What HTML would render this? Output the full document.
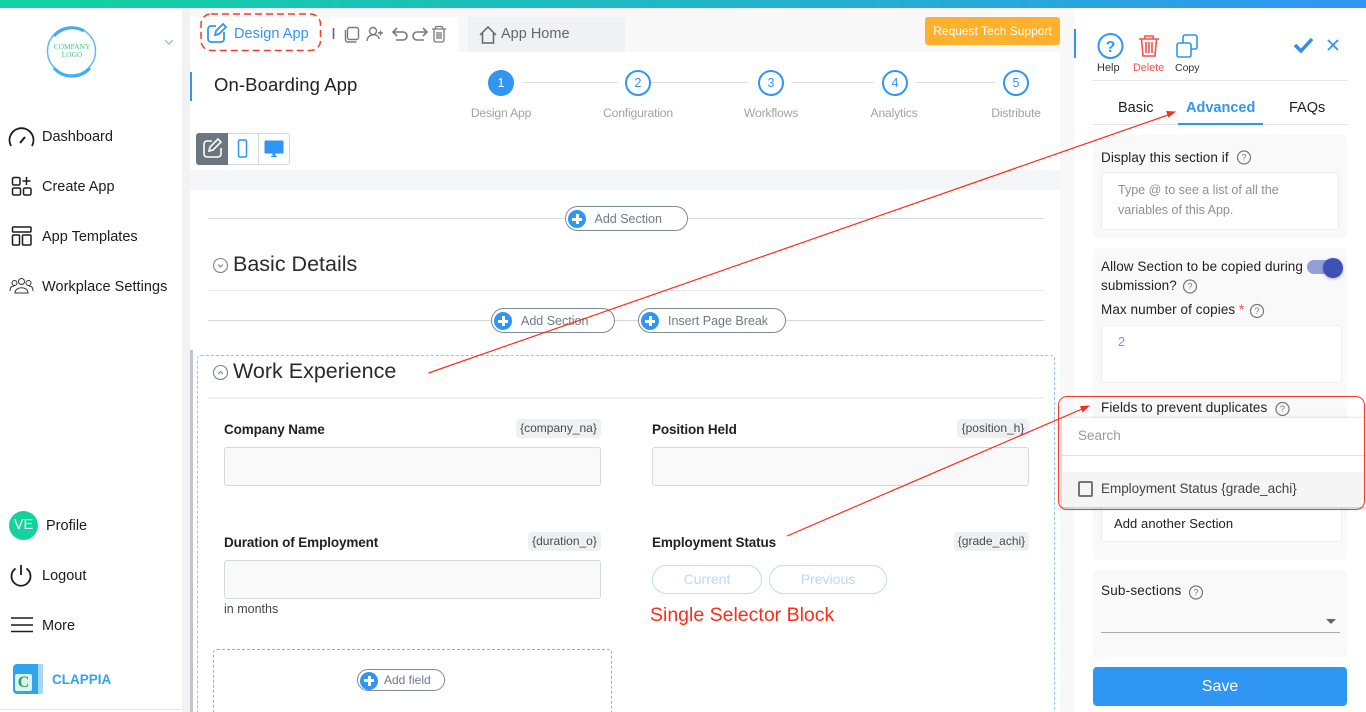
<!DOCTYPE html>
<html><head><meta charset="utf-8"><style>
html,body{margin:0;padding:0;width:1366px;height:712px;overflow:hidden;background:#fff;font-family:"Liberation Sans",sans-serif;color:#222}
#p{position:relative;width:1366px;height:712px;overflow:hidden}
.a{position:absolute;box-sizing:border-box}
.t{position:absolute;white-space:nowrap;line-height:20px;height:20px}
svg{position:absolute;overflow:visible}
.nav{font-size:14.5px;color:#1c1c1c}
.step{font-size:12.2px;color:#a3a3a3;letter-spacing:-.2px;text-align:center;width:100px}
.sc{border-radius:50%;background:#fff;border:2px solid #3096f3;width:26px;height:26px;color:#3096f3;font-size:12.5px;text-align:center;line-height:22px;position:absolute;box-sizing:border-box}
.pill{position:absolute;box-sizing:border-box;height:25px;border:1px solid #7d8a97;border-radius:13px;background:#fff;color:#6e7a86;font-size:12.5px;line-height:24px;white-space:nowrap}
.plus{position:absolute;left:2px;top:3px;width:18px;height:18px;border-radius:50%;background:#3096f3}
.plus:before{content:"";position:absolute;left:4px;top:7.5px;width:10px;height:3px;background:#fff}
.plus:after{content:"";position:absolute;left:7.5px;top:4px;width:3px;height:10px;background:#fff}
.h{height:1px;background:#d8d8d8;position:absolute}
.lab{font-size:13.5px;font-weight:bold;color:#222;letter-spacing:-.12px}
.tag{position:absolute;height:19px;background:#eff0f3;border-radius:4px;font-size:12px;color:#4a4a4a;line-height:18px;text-align:center;white-space:nowrap}
.inp{position:absolute;box-sizing:border-box;height:39px;width:377px;background:#f9f9fa;border:1px solid #d5d8dc;border-radius:3px}
.sel{position:absolute;box-sizing:border-box;height:29px;border:1px solid #bcdcfb;border-radius:15px;color:#b9dafb;font-size:14px;line-height:27px;text-align:center}
.rt{font-size:13.5px;color:#222;letter-spacing:.07px}
.card{position:absolute;background:#f9f9f9;border-radius:5px;left:1093px;width:254px}
.white{position:absolute;background:#fff;border:1px solid #eee;border-radius:4px;box-sizing:border-box}
</style></head><body><div id="p">

<div class="a" style="left:0;top:0;width:1366px;height:8px;background:linear-gradient(90deg,#10d2a0,#22b7c6 50%,#2f96f3)"></div>
<div class="a" style="left:182px;top:8px;width:8px;height:704px;background:#f2f2f2"></div>
<div class="a" style="left:190px;top:8px;width:884px;height:704px;background:#f8f8f8"></div>
<div class="a" style="left:0;top:709px;width:182px;height:1px;background:#e6e6e6"></div>

<!-- sidebar -->
<svg style="left:0;top:0" width="190" height="712" fill="none" stroke="#1c1c1c">
<circle cx="71.5" cy="51" r="24" stroke="#5bbcf3" stroke-width="1.5"/>
<path d="M54 36a24 24 0 0 1 30-5M90 68a24 24 0 0 1-36 0" stroke="#42aef0" stroke-width="3"/>
<path d="M165 40l4 4 4-4" stroke="#74b4f2" stroke-width="1"/>
<path d="M11 146a12 12 0 1 1 21 0" stroke-width="1.8"/><path d="M20 143l5-6" stroke-width="2"/>
<g stroke-width="1.5"><rect x="12.5" y="177.500" width="7.500" height="7.500" rx="1.500"/><rect x="12.5" y="188" width="8" height="7" rx="1.500"/><rect x="23.5" y="188" width="7.500" height="7" rx="1.500"/><path d="M22.5 181h8M26.500 177v8"/>
<rect x="12.5" y="227" width="18.500" height="5" rx="1"/><rect x="12.5" y="235" width="7" height="10" rx="1"/><rect x="22.5" y="235" width="8.500" height="10" rx="1"/></g>
<g stroke-width="1" stroke="#333"><circle cx="21.5" cy="281.500" r="3"/><circle cx="14.5" cy="283" r="2.500"/><circle cx="28.5" cy="283" r="2.500"/><path d="M15 293c0-7 13-7 13 0l-2 0h-9zM10 291c0-4 2-5 4-5M33 291c0-4-2-5-4-5"/></g>
<path d="M15.5 568.500a9.500 9.500 0 1 0 11 0M21 565v10" stroke-width="1.800"/>
<path d="M11 618h22M11 625h22M11 631.500h22" stroke-width="1.500"/>
</svg>
<div class="t" style="left:50px;top:43px;font:7.5px/7.5px 'Liberation Serif',serif;color:#3fce85;width:44px;text-align:center;height:16px">COMPANY<br>LOGO</div>
<div class="t nav" style="left:42px;top:127px">Dashboard</div>
<div class="t nav" style="left:42px;top:177px">Create App</div>
<div class="t nav" style="left:42px;top:227px">App Templates</div>
<div class="t nav" style="left:42px;top:277px;letter-spacing:.04px">Workplace Settings</div>
<div class="a" style="left:9px;top:511px;width:29px;height:29px;border-radius:50%;background:#12d39b;color:#fff;font-size:14.5px;text-align:center;line-height:29px">VE</div>
<div class="t nav" style="left:46px;top:516px">Profile</div>
<div class="t nav" style="left:42px;top:566px">Logout</div>
<div class="t nav" style="left:42px;top:616px">More</div>
<div class="a" style="left:13px;top:664px;width:30px;height:30px;border-radius:4px;background:#2ea5ec"></div>
<div class="a" style="left:38px;top:664px;width:5px;height:30px;background:#a6d7f7"></div>
<div class="a" style="left:15px;top:674px;width:17px;height:17px;background:#dff3ea;border-radius:2px;color:#1fa85b;font:bold 16px/17px 'Liberation Serif',serif;text-align:center">C</div>
<div class="t" style="left:52px;top:670px;font-size:13.5px;font-weight:bold;color:#2ea5ec">CLAPPIA</div>

<!-- top header -->
<div class="a" style="left:190px;top:17px;width:268px;height:35px;background:#fff"></div>
<div class="a" style="left:468px;top:17px;width:157px;height:35px;background:#f0f1f4"></div>
<div class="a" style="left:190px;top:52px;width:870px;height:118px;background:#fff"></div>
<div class="a" style="left:190px;top:170px;width:870px;height:20px;background:#f5f6f8"></div>
<div class="a" style="left:190px;top:190px;width:870px;height:522px;background:#fff"></div>
<div class="a" style="left:1074px;top:8px;width:292px;height:704px;background:#fff"></div>
<div class="a" style="left:190px;top:72px;width:2px;height:29px;background:#3096f3"></div>
<div class="a" style="left:190px;top:350px;width:3px;height:362px;background:#bcc6cf"></div>

<div class="t" style="left:234px;top:24px;font-size:14.5px;color:#3096f3;letter-spacing:.06px">Design App</div>
<div class="t" style="left:501px;top:24px;font-size:14.5px;color:#666">App Home</div>
<div class="t" style="left:214px;top:75px;font-size:18.5px;color:#222;letter-spacing:.1px">On-Boarding App</div>

<svg style="left:0;top:0" width="1366" height="712" fill="none">
<rect x="201" y="14" width="119.500" height="36.500" rx="10" stroke="#fb3a27" stroke-width="1.500" stroke-dasharray="7 4"/>
<g stroke="#3096f3" stroke-width="1.800"><path d="M216 26h-5a3 3 0 0 0-3 3v10a3 3 0 0 0 3 3h10a3 3 0 0 0 3-3v-7"/><path d="M215 35l1-4 7-7 3 3-7 7z"/></g>
<path d="M333.500 28v11" stroke="#666" stroke-width="1.600"/>
<g stroke="#7a7a7a" stroke-width="1.400"><rect x="347.500" y="27.500" width="11" height="12" rx="2"/><path d="M345.500 30v10a2 2 0 0 0 2 2h9"/>
<circle cx="373" cy="31" r="3.500"/><path d="M367 41c0-8 12-8 12-2M378 33h5M380.500 30.500v5"/>
<path d="M397 28l-4 4 4 4M393 32h10a4 4 0 0 1 0 8h-7" stroke-width="1.600"/>
<path d="M423 28l4 4-4 4M427 32h-10a4 4 0 0 0 0 8h7" stroke-width="1.600"/>
<path d="M432 29h14M435.500 29v-1.500a1 1 0 0 1 1-1h5a1 1 0 0 1 1 1V29M434 29v11a2 2 0 0 0 2 2h6a2 2 0 0 0 2-2V29M437 32v7M439 32v7M441 32v7" stroke-width="1.300"/></g>
<path d="M480 35l8-8 8 8M482.500 33v10h11V33" stroke="#666" stroke-width="1.500"/>
<path d="M522 82.500h96M646 82.500h102M791 82.500h83M915 82.500h81" stroke="#e0e0e0" stroke-width="1"/>
</svg>

<!-- steps -->
<div class="sc" style="left:488px;top:70px;background:#3096f3;color:#fff">1</div>
<div class="sc" style="left:625px;top:70px">2</div>
<div class="sc" style="left:758px;top:70px">3</div>
<div class="sc" style="left:882px;top:70px">4</div>
<div class="sc" style="left:1003px;top:70px">5</div>
<div class="t step" style="left:451px;top:103px">Design App</div>
<div class="t step" style="left:588px;top:103px">Configuration</div>
<div class="t step" style="left:721px;top:103px">Workflows</div>
<div class="t step" style="left:844px;top:103px">Analytics</div>
<div class="t step" style="left:966px;top:103px">Distribute</div>

<div class="a" style="left:925px;top:17px;width:135px;height:28px;background:#ffb02c;border-radius:3px;color:#fff;font-size:12px;text-align:center;line-height:28px">Request Tech Support</div>

<!-- view toggle -->
<div class="a" style="left:196px;top:133px;width:94px;height:32px;border:1px solid #d5d5d5;border-radius:3px"></div>
<div class="a" style="left:196px;top:133px;width:32px;height:32px;background:#6b7680;border-radius:3px 0 0 3px"></div>
<div class="a" style="left:258px;top:133px;width:1px;height:32px;background:#d5d5d5"></div>
<svg style="left:0;top:0" width="300" height="170" fill="none">
<path d="M212 141h-5a3 3 0 0 0-3 3v10a3 3 0 0 0 3 3h11a3 3 0 0 0 3-3v-6M209 151l1-4 8-8 3 3-8 8z" stroke="#fff" stroke-width="1.600"/>
<rect x="238.500" y="140" width="8" height="17" rx="1.500" stroke="#3096f3" stroke-width="1.500" fill="#fff"/>
<path d="M266 141h16a1 1 0 0 1 1 1v11h-18v-11a1 1 0 0 1 1-1zM271 156.500h6" stroke="#3096f3" stroke-width="1" fill="#3096f3"/><path d="M274 153v3" stroke="#3096f3" stroke-width="3"/>
</svg>

<!-- canvas -->
<div class="h" style="left:208px;top:218px;width:836px"></div>
<div class="pill" style="left:565px;top:206px;width:123px;padding-left:28.5px"><span class="plus"></span>Add Section</div>
<svg style="left:0;top:0" width="240" height="390" fill="none" stroke="#7a8590" stroke-width="1.100">
<circle cx="220.5" cy="265.500" r="7"/><path d="M218 264.500l2.500 2.500 2.500-2.500"/>
<circle cx="220.5" cy="372.500" r="7"/><path d="M218 374l2.500-2.500 2.500 2.500"/>
</svg>
<div class="t" style="left:233px;top:254px;font-size:21.5px;color:#2b2b2b;line-height:21px">Basic Details</div>
<div class="a" style="left:208px;top:290px;width:836px;height:1px;background:#e8e8e8"></div>
<div class="h" style="left:208px;top:320px;width:836px"></div>
<div class="pill" style="left:491px;top:308px;width:124px;padding-left:29px"><span class="plus"></span>Add Section</div>
<div class="pill" style="left:638px;top:308px;width:148px;padding-left:29px"><span class="plus"></span>Insert Page Break</div>

<div class="a" style="left:197px;top:355px;width:858px;height:370px;border:1px dashed #8cc6f8;border-radius:4px"></div>
<div class="t" style="left:233px;top:361px;font-size:21.5px;color:#2b2b2b">Work Experience</div>
<div class="a" style="left:208px;top:397px;width:836px;height:2px;background:#f1f1f1"></div>

<div class="t lab" style="left:224px;top:420px">Company Name</div>
<div class="tag" style="left:516px;top:419px;width:85px">{company_na}</div>
<div class="inp" style="left:224px;top:447px"></div>
<div class="t lab" style="left:224px;top:533px">Duration of Employment</div>
<div class="tag" style="left:528px;top:532px;width:73px">{duration_o}</div>
<div class="inp" style="left:224px;top:560px"></div>
<div class="t" style="left:224px;top:599px;font-size:12.5px;color:#444">in months</div>

<div class="t lab" style="left:652px;top:420px">Position Held</div>
<div class="tag" style="left:957px;top:419px;width:72px">{position_h}</div>
<div class="inp" style="left:652px;top:447px"></div>
<div class="t lab" style="left:652px;top:533px">Employment Status</div>
<div class="tag" style="left:954px;top:532px;width:75px">{grade_achi}</div>
<div class="sel" style="left:652px;top:565px;width:110px">Current</div>
<div class="sel" style="left:769px;top:565px;width:118px">Previous</div>
<div class="t" style="left:650px;top:604px;font-size:19.5px;color:#fb2d1a;line-height:22px;height:22px">Single Selector Block</div>

<div class="a" style="left:213px;top:649px;width:399px;height:80px;border:1px dashed #aaa;border-radius:4px"></div>
<div class="pill" style="left:357px;top:669px;width:88px;height:22px;line-height:21px;padding-left:26px;border-radius:11px;font-size:12px"><span class="plus" style="left:2px;top:1.5px"></span>Add field</div>

<!-- right panel -->
<div class="a" style="left:1074px;top:29px;width:2px;height:29px;background:#3096f3"></div>
<svg style="left:0;top:0" width="1366" height="712" fill="none">
<circle cx="1110.5" cy="46" r="12" stroke="#3096f3" stroke-width="2"/>
<g stroke="#f4524a" stroke-width="1.600"><path d="M1139 39h20M1145 39v-3h8v3M1141.500 39l1.500 17h12l1.500-17M1146 42v11M1149 42v11M1152 42v11"/></g>
<g stroke="#3096f3" stroke-width="1.600"><rect x="1177" y="43" width="14" height="14" rx="2"/><path d="M1183 43v-6a2 2 0 0 1 2-2h10a2 2 0 0 1 2 2v10a2 2 0 0 1-2 2h-4"/></g>
<path d="M1295 45l6 6 11-12" stroke="#2f90e8" stroke-width="3.500"/>
<path d="M1328 40l10 10M1338 40l-10 10" stroke="#3096f3" stroke-width="1.800"/>
</svg>
<div class="t" style="left:1097px;top:58px;font-size:11px;color:#333">Help</div>
<div class="t" style="left:1133px;top:58px;font-size:10.8px;color:#f4524a">Delete</div>
<div class="t" style="left:1175px;top:58px;font-size:10.5px;color:#333">Copy</div>
<div class="a" style="left:1093px;top:80px;width:254px;height:1px;background:#e6e6e6"></div>
<div class="t" style="left:1118px;top:98px;font-size:14.5px;color:#222">Basic</div>
<div class="t" style="left:1186px;top:98px;font-size:14.5px;font-weight:bold;color:#3096f3">Advanced</div>
<div class="t" style="left:1289px;top:98px;font-size:14.5px;color:#222">FAQs</div>
<div class="a" style="left:1093px;top:124px;width:254px;height:1px;background:#e6e6e6"></div>
<div class="a" style="left:1178px;top:123px;width:85px;height:2px;background:#3096f3"></div>

<div class="card" style="top:135px;height:103px"></div>
<div class="t rt" style="left:1101px;top:148px">Display this section if</div>
<div class="white" style="left:1101px;top:172px;width:238px;height:58px"></div>
<div class="t" style="left:1118px;top:180px;font-size:12.5px;color:#8f8f8f">Type @ to see a list of all the</div>
<div class="t" style="left:1118px;top:200px;font-size:12.5px;color:#8f8f8f">variables of this App.</div>

<div class="card" style="top:248px;height:312px"></div>
<div class="t rt" style="left:1101px;top:257px">Allow Section to be copied during</div>
<div class="t rt" style="left:1101px;top:276px">submission?</div>
<div class="a" style="left:1307px;top:260px;width:34px;height:14px;border-radius:7px;background:#949fd8"></div>
<div class="a" style="left:1323px;top:258px;width:20px;height:20px;border-radius:50%;background:#3f51b5;box-shadow:0 1px 3px rgba(0,0,0,.3)"></div>
<div class="t rt" style="left:1101px;top:300px">Max number of copies <span style="color:#f4524a">*</span></div>
<div class="white" style="left:1101px;top:325px;width:241px;height:58px"></div>
<div class="t" style="left:1118px;top:332px;font-size:12.5px;color:#a77cf0">2</div>
<div class="t rt" style="left:1101px;top:398px">Fields to prevent duplicates</div>

<div class="white" style="left:1101px;top:500px;width:241px;height:42px"></div>
<div class="t" style="left:1114px;top:514px;font-size:13px;color:#222;letter-spacing:.07px">Add another Section</div>

<div class="a" style="left:1062px;top:418px;width:304px;height:89px;background:#fff;box-shadow:0 1px 4px rgba(0,0,0,.3)"></div>
<div class="t" style="left:1078px;top:426px;font-size:13.5px;color:#9a9a9a">Search</div>
<div class="a" style="left:1062px;top:455px;width:304px;height:1px;background:#e2e2e2"></div>
<div class="a" style="left:1062px;top:472px;width:304px;height:35px;background:#f5f5f5"></div>
<div class="a" style="left:1078px;top:481px;width:15px;height:16px;border:2px solid #757575;border-radius:2px"></div>
<div class="t" style="left:1101px;top:479px;font-size:13.5px;color:#444;letter-spacing:-.03px">Employment Status {grade_achi}</div>
<div class="a" style="left:1058px;top:396px;width:307px;height:114px;border:1.5px solid #fb3a27;border-radius:9px"></div>

<div class="card" style="top:570px;height:87px"></div>
<div class="t rt" style="left:1101px;top:581px;letter-spacing:.2px">Sub-sections</div>
<div class="a" style="left:1101px;top:632px;width:239px;height:1px;background:#aaa"></div>
<svg style="left:0;top:0" width="1366" height="712" fill="none">
<path d="M1326 619h10l-5 5z" fill="#666"/>
<g stroke="#777" stroke-width="1.200">
<circle cx="1244" cy="157.500" r="6.500"/><circle cx="1190" cy="286.500" r="6.500"/><circle cx="1257" cy="311" r="6.500"/><circle cx="1282.500" cy="409" r="6.500"/><circle cx="1196" cy="592.500" r="6.500"/></g>
<g fill="#777" font-family="Liberation Sans,sans-serif" font-size="9" text-anchor="middle">
<text x="1244" y="160.500">?</text><text x="1190" y="289.500">?</text><text x="1257" y="314">?</text><text x="1282.500" y="412">?</text><text x="1196" y="595.500">?</text></g>
<text x="1110.5" y="52" fill="#3096f3" font-family="Liberation Sans,sans-serif" font-size="16" font-weight="bold" text-anchor="middle">?</text>
<!-- arrows -->
<path d="M428.500 373L1168 115" stroke="#fb2d1a" stroke-width="1.200"/>
<path d="M1176 111.500l-10-.5 2.500 6.500z" fill="#fb2d1a"/>
<path d="M787 536L1082 409" stroke="#fb2d1a" stroke-width="1.200"/>
<path d="M1090 405.500l-10 .5 2.500 6.500z" fill="#fb2d1a"/>
</svg>
<div class="a" style="left:1093px;top:667px;width:254px;height:39px;background:#3096f3;border-radius:4px;color:#fff;font-size:16px;text-align:center;line-height:39px">Save</div>

</div></body></html>
